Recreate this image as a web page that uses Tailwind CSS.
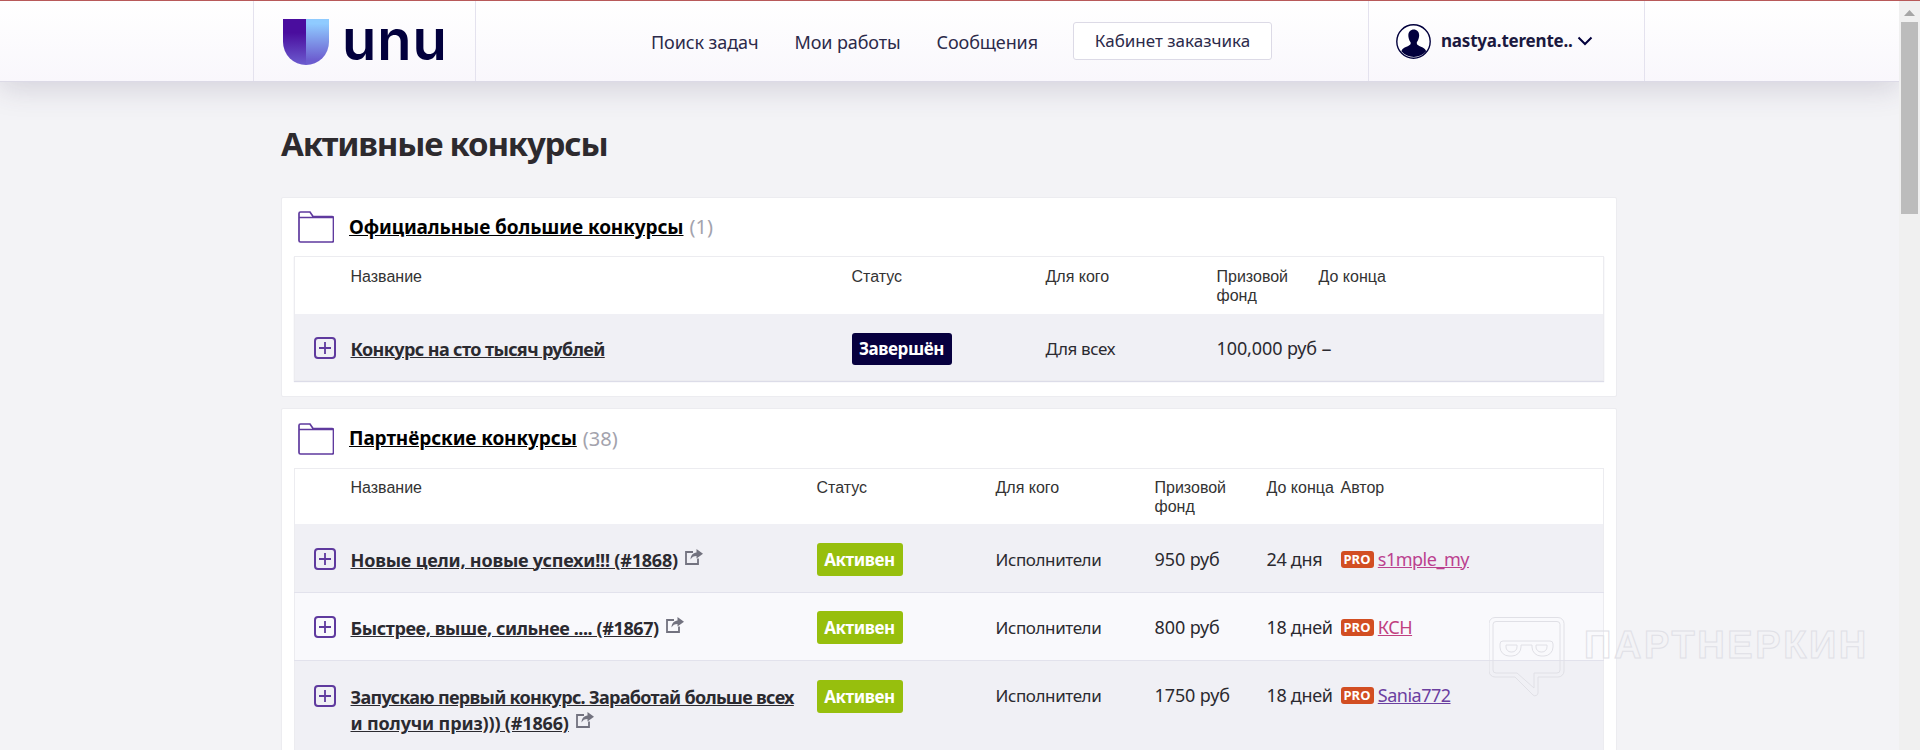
<!DOCTYPE html>
<html lang="ru">
<head>
    <meta charset="UTF-8">
    <title>Активные конкурсы</title>
    <script src="https://cdn.jsdelivr.net/npm/@tailwindcss/browser@4"></script>
</head>
<body class="h-[750px] overflow-hidden bg-[#f3f3f6] font-['Noto_Sans',sans-serif] text-[#2b2a30]">
    <div class="h-px bg-[#b85a5a]"></div>
    <div class="flex h-[749px]">
        <main class="relative flex-1 overflow-hidden">
            <!-- Header -->
            <header class="relative z-10 h-[81px] border-b border-[#dcdae6] bg-gradient-to-b from-white to-[#f9f7fc] pl-[253px] shadow-[0_6px_30px_rgba(60,50,90,0.18)]">
                <div class="flex h-full w-[1392px]">
                    <div class="flex w-[223px] items-start border-x border-[#e4e2ee] pl-[29px] pt-[18px]">
                        <svg width="46" height="46" viewBox="0 0 46 46">
                            <defs>
                                <linearGradient id="logoLeft" x1="0" y1="0" x2="0" y2="1"><stop offset="0.3" stop-color="#4a0d9e"/><stop offset="1" stop-color="#6c5ccf"/></linearGradient>
                                <linearGradient id="logoRight" x1="0" y1="0" x2="0" y2="1"><stop offset="0.1" stop-color="#8fcbff"/><stop offset="0.9" stop-color="#6c5ccf"/></linearGradient>
                            </defs>
                            <path d="M0 0H23V46A23 23 0 0 1 0 23Z" fill="url(#logoLeft)"/>
                            <path d="M23 0H46V23A23 23 0 0 1 23 46Z" fill="url(#logoRight)"/>
                        </svg>
                        <span class="ml-[13px] mt-[-17px] font-['Inter',sans-serif] text-[56px] font-semibold leading-[76px] tracking-[1px] text-[#02003d]">unu</span>
                    </div>
                    <nav class="flex flex-1 items-center pl-[175px] pt-[2px] text-[18px] tracking-[-0.1px] text-[#2c2a4a]">
                        <a class="mr-[36px]">Поиск задач</a>
                        <a class="mr-[36px]">Мои работы</a>
                        <a class="mr-[35px]">Сообщения</a>
                        <a class="mt-[-3px] flex h-[38px] w-[199px] items-center justify-center rounded-[3px] border border-[#dcdae6] bg-white text-[17px] tracking-normal">Кабинет заказчика</a>
                    </nav>
                    <div class="flex w-[277px] items-center border-x border-[#e4e2ee] pl-[27px]">
                        <svg width="35" height="35" viewBox="0 0 35 35">
                            <circle cx="17.5" cy="17.5" r="16.7" fill="#fff" stroke="#02003d" stroke-width="1.4"/>
                            <path d="M17.5 5.5c4 0 6 3 5.600 6.800-.2 2.200-1 4.200-2 5.500-.5.7-.4 2.200.3 2.900 2 1.700 6.500 2.500 8.200 5.300.3.500.4 1 .4 1.500A16.700 16.700 0 0 1 5.500 27.600c0-.6.100-1.100.4-1.500 1.700-2.800 6.200-3.600 8.200-5.300.7-.7.8-2.200.3-2.900-1-1.300-1.800-3.300-2-5.500-.4-3.800 1.600-6.800 5.600-6.800Z" fill="#02003d"/>
                        </svg>
                        <span class="ml-[10px] text-[17px] font-bold tracking-[-0.2px] text-[#1b1940]">nastya.terente..</span>
                        <svg class="ml-[4px]" width="16" height="10" viewBox="0 0 16 10"><path d="M1.500 1.500 8 8l6.500-6.500" fill="none" stroke="#02003d" stroke-width="2"/></svg>
                    </div>
                </div>
            </header>

            <div class="ml-[281px] w-[1336px]">
                <h1 class="mt-[37px] mb-[28px] h-[50px] text-[33px] font-bold leading-[50px] tracking-[-1.2px] text-[#2d2a2e]">Активные конкурсы</h1>

                <!-- Official contests -->
                <section class="h-[200px] rounded-[2px] border border-[#ececf0] bg-white px-[12px]">
                    <div class="flex h-[58px] items-center pl-[4px]">
                        <svg width="36" height="32" viewBox="0 0 36 32"><path d="M1 8V2.500C1 1.500 1.500 1 2.500 1h9.500l3 4.500h19c1 0 1.500.5 1.500 1.500v22.500c0 1-.5 1.500-1.500 1.500h-31.500C1.500 31 1 30.500 1 29.500ZM1 6.500h34" fill="none" stroke="#5f3a9e" stroke-width="1.700"/></svg>
                        <a class="ml-[15px] text-[19px] font-bold tracking-[-0.1px] text-black underline">Официальные большие конкурсы</a>
                        <span class="ml-[6px] text-[20px] text-[#a3a3ad]">(1)</span>
                    </div>
                    <table class="w-full table-fixed border border-[#ececf0] shadow-[0_1px_1px_#dcdce8]">
                        <colgroup><col class="w-[56px]"><col class="w-[501px]"><col class="w-[194px]"><col class="w-[171px]"><col class="w-[102px]"><col></colgroup>
                        <tr class="h-[57px] align-top text-left font-['Liberation_Sans',sans-serif] text-[16px] leading-[19px] text-[#333]">
                            <th></th><th class="pt-[10px] font-normal">Название</th><th class="pt-[10px] font-normal">Статус</th><th class="pt-[10px] font-normal">Для кого</th><th class="pt-[10px] font-normal">Призовой<br>фонд</th><th class="pt-[10px] font-normal">До конца</th>
                        </tr>
                        <tr class="h-[67px] bg-[#f0f0f5] align-top text-[17px] leading-[33px] tracking-[-0.4px]">
                            <td class="pl-[19px] pt-[23px]">
                                <svg width="22" height="22" viewBox="0 0 22 22"><rect x="1" y="1" width="20" height="20" rx="3" fill="none" stroke="#5f3a9e" stroke-width="2"/><path d="M11 5v12M5 11h12" stroke="#5f3a9e" stroke-width="1.800"/></svg>
                            </td>
                            <td class="pt-[22px] text-[18px] font-bold leading-[26px] tracking-[-0.6px]"><a class="underline">Конкурс на сто тысяч рублей</a></td>
                            <td class="pt-[18px]"><span class="inline-block h-[32px] w-[100px] rounded-[3px] bg-[#07003f] text-center text-[17px] font-bold leading-[32px] text-white">Завершён</span></td>
                            <td class="pt-[18px]">Для всех</td>
                            <td class="whitespace-nowrap pt-[18px] text-[18px] tracking-[-0.1px]">100,000 руб</td>
                            <td class="pl-[3px] pt-[18px] text-[20px]">–</td>
                        </tr>
                    </table>
                </section>

                <!-- Partner contests -->
                <section class="mt-[11px] h-[400px] rounded-[2px] border border-[#ececf0] bg-white px-[12px]">
                    <div class="flex h-[59px] items-center pl-[4px]">
                        <svg width="36" height="32" viewBox="0 0 36 32"><path d="M1 8V2.500C1 1.500 1.500 1 2.500 1h9.500l3 4.500h19c1 0 1.500.5 1.500 1.500v22.500c0 1-.5 1.500-1.500 1.500h-31.500C1.500 31 1 30.500 1 29.500ZM1 6.500h34" fill="none" stroke="#5f3a9e" stroke-width="1.700"/></svg>
                        <a class="ml-[15px] text-[19px] font-bold tracking-[-0.1px] text-black underline">Партнёрские конкурсы</a>
                        <span class="ml-[6px] text-[20px] text-[#a3a3ad]">(38)</span>
                    </div>
                    <table class="w-full table-fixed border-x border-t border-[#ececf0]">
                        <colgroup><col class="w-[56px]"><col class="w-[466px]"><col class="w-[179px]"><col class="w-[159px]"><col class="w-[112px]"><col class="w-[74px]"><col></colgroup>
                        <tr class="h-[55px] align-top text-left font-['Liberation_Sans',sans-serif] text-[16px] leading-[19px] text-[#333]">
                            <th></th><th class="pt-[9px] font-normal">Название</th><th class="pt-[9px] font-normal">Статус</th><th class="pt-[9px] font-normal">Для кого</th><th class="pt-[9px] font-normal">Призовой<br>фонд</th><th class="pt-[9px] font-normal">До конца</th><th class="pt-[9px] font-normal">Автор</th>
                        </tr>
                        <tr class="h-[69px] border-b border-[#e2e2ec] bg-[#f0f0f5] align-top text-[17px] leading-[33px] tracking-[-0.4px]">
                            <td class="pl-[19px] pt-[24px]">
                                <svg width="22" height="22" viewBox="0 0 22 22"><rect x="1" y="1" width="20" height="20" rx="3" fill="none" stroke="#5f3a9e" stroke-width="2"/><path d="M11 5v12M5 11h12" stroke="#5f3a9e" stroke-width="1.800"/></svg>
                            </td>
                            <td class="pt-[23px] text-[18px] font-bold leading-[26px] tracking-[-0.2px]"><a class="underline">Новые цели, новые успехи!!! (#1868)</a>
                                <svg class="ml-[3px] inline-block align-[2px]" width="18" height="16" viewBox="0 0 18 16"><path d="M8 3H1v12h12V9.500" fill="none" stroke="#72727f" stroke-width="1.800"/><path d="M11.500 0 18 4.700l-6.500 4.800V7c-3 0-4.500 1-6 3.500.3-4.500 2.500-6.500 6-7Z" fill="#72727f"/></svg>
                            </td>
                            <td class="pt-[19px]"><span class="inline-block h-[33px] w-[86px] rounded-[3px] bg-[#97bf0d] text-center text-[17px] font-bold leading-[33px] text-white">Активен</span></td>
                            <td class="pt-[19px]">Исполнители</td>
                            <td class="pt-[19px] text-[18px] tracking-[-0.1px]">950 руб</td>
                            <td class="pt-[19px] text-[18px] tracking-[-0.3px]">24 дня</td>
                            <td class="pt-[19px] text-[18px]"><span class="inline-block h-[17px] w-[33px] rounded-[3px] bg-[#d24e22] text-center align-[2px] text-[13px] font-bold leading-[17px] tracking-normal text-white">PRO</span> <a class="tracking-[-0.5px] text-[#bb418f] underline">s1mple_my</a></td>
                        </tr>
                        <tr class="h-[68px] border-b border-[#e2e2ec] bg-[#f9f9fc] align-top text-[17px] leading-[33px] tracking-[-0.4px]">
                            <td class="pl-[19px] pt-[23px]">
                                <svg width="22" height="22" viewBox="0 0 22 22"><rect x="1" y="1" width="20" height="20" rx="3" fill="none" stroke="#5f3a9e" stroke-width="2"/><path d="M11 5v12M5 11h12" stroke="#5f3a9e" stroke-width="1.800"/></svg>
                            </td>
                            <td class="pt-[22px] text-[18px] font-bold leading-[26px]"><a class="underline">Быстрее, выше, сильнее .... (#1867)</a>
                                <svg class="ml-[3px] inline-block align-[2px]" width="18" height="16" viewBox="0 0 18 16"><path d="M8 3H1v12h12V9.500" fill="none" stroke="#72727f" stroke-width="1.800"/><path d="M11.500 0 18 4.700l-6.500 4.800V7c-3 0-4.500 1-6 3.500.3-4.500 2.500-6.500 6-7Z" fill="#72727f"/></svg>
                            </td>
                            <td class="pt-[18px]"><span class="inline-block h-[33px] w-[86px] rounded-[3px] bg-[#97bf0d] text-center text-[17px] font-bold leading-[33px] text-white">Активен</span></td>
                            <td class="pt-[18px]">Исполнители</td>
                            <td class="pt-[18px] text-[18px] tracking-[-0.1px]">800 руб</td>
                            <td class="pt-[18px] text-[18px] tracking-[-0.3px]">18 дней</td>
                            <td class="pt-[18px] text-[18px]"><span class="inline-block h-[17px] w-[33px] rounded-[3px] bg-[#d24e22] text-center align-[2px] text-[13px] font-bold leading-[17px] tracking-normal text-white">PRO</span> <a class="tracking-[-0.5px] text-[#c0407f] underline">КСН</a></td>
                        </tr>
                        <tr class="h-[100px] bg-[#f0f0f5] align-top text-[17px] leading-[33px] tracking-[-0.4px]">
                            <td class="pl-[19px] pt-[24px]">
                                <svg width="22" height="22" viewBox="0 0 22 22"><rect x="1" y="1" width="20" height="20" rx="3" fill="none" stroke="#5f3a9e" stroke-width="2"/><path d="M11 5v12M5 11h12" stroke="#5f3a9e" stroke-width="1.800"/></svg>
                            </td>
                            <td class="pt-[23px] text-[18px] font-bold leading-[26px] tracking-[-0.15px]"><a class="underline"><span class="tracking-[-0.7px]">Запускаю первый конкурс. Заработай больше всех</span><br>и получи приз))) (#1866)</a>
                                <svg class="ml-[3px] inline-block align-[2px]" width="18" height="16" viewBox="0 0 18 16"><path d="M8 3H1v12h12V9.500" fill="none" stroke="#72727f" stroke-width="1.800"/><path d="M11.500 0 18 4.700l-6.500 4.800V7c-3 0-4.500 1-6 3.500.3-4.500 2.500-6.500 6-7Z" fill="#72727f"/></svg>
                            </td>
                            <td class="pt-[19px]"><span class="inline-block h-[33px] w-[86px] rounded-[3px] bg-[#97bf0d] text-center text-[17px] font-bold leading-[33px] text-white">Активен</span></td>
                            <td class="pt-[18px]">Исполнители</td>
                            <td class="pt-[18px] text-[18px] tracking-[-0.1px]">1750 руб</td>
                            <td class="pt-[18px] text-[18px] tracking-[-0.3px]">18 дней</td>
                            <td class="pt-[18px] text-[18px]"><span class="inline-block h-[17px] w-[33px] rounded-[3px] bg-[#d24e22] text-center align-[2px] text-[13px] font-bold leading-[17px] tracking-normal text-white">PRO</span> <a class="tracking-[-0.5px] text-[#6b3fa0] underline">Sania772</a></td>
                        </tr>
                    </table>
                </section>
            </div>

            <!-- Watermark -->
            <div class="absolute left-[1489px] top-[616px] z-20 flex items-start">
                <svg width="76" height="81" viewBox="0 0 76 81" fill="none" stroke="#e0e0e6" stroke-width="1">
                    <path d="M6 .5H69a6 6 0 0 1 6 6V54a6 6 0 0 1-6 6H49V76a3 3 0 0 1-5 2L26 60H6a6 6 0 0 1-6-6V6.500A6 6 0 0 1 6 .5Z"/>
                    <path d="M7 4.500H68a3 3 0 0 1 3 3V53a3 3 0 0 1-3 3H45V71L28 56H7a3 3 0 0 1-3-3V7.500a3 3 0 0 1 3-3Z"/>
                    <path d="M14 24H61a3 3 0 0 1 3 3v3a9 9 0 0 1-9 9h-3a9 9 0 0 1-9-9V28H32v2a9 9 0 0 1-9 9h-3a9 9 0 0 1-9-9v-3a3 3 0 0 1 3-3Z"/>
                    <path d="M17 28h11v2a5 5 0 0 1-5 5h-1a5 5 0 0 1-5-5ZM47 28h11v2a5 5 0 0 1-5 5h-1a5 5 0 0 1-5-5Z"/>
                </svg>
                <span class="ml-[19px] mt-[6px] font-['Liberation_Sans',sans-serif] text-[38px] font-bold leading-[44px] tracking-[2.6px] text-transparent [-webkit-text-stroke:1px_#e0e0e6]">ПАРТНЕРКИН</span>
            </div>
        </main>

        <!-- Scrollbar -->
        <aside class="relative z-20 w-[21px] bg-[#f0f0f0] pl-[2px] pt-[9px]">
            <svg class="ml-[3px]" width="11" height="6" viewBox="0 0 11 6"><path d="M5.500 0 11 6H0Z" fill="#a6a6a6"/></svg>
            <div class="mt-[6px] h-[192px] w-[17px] bg-[#bcbcbc]"></div>
        </aside>
    </div>
</body>
</html>
